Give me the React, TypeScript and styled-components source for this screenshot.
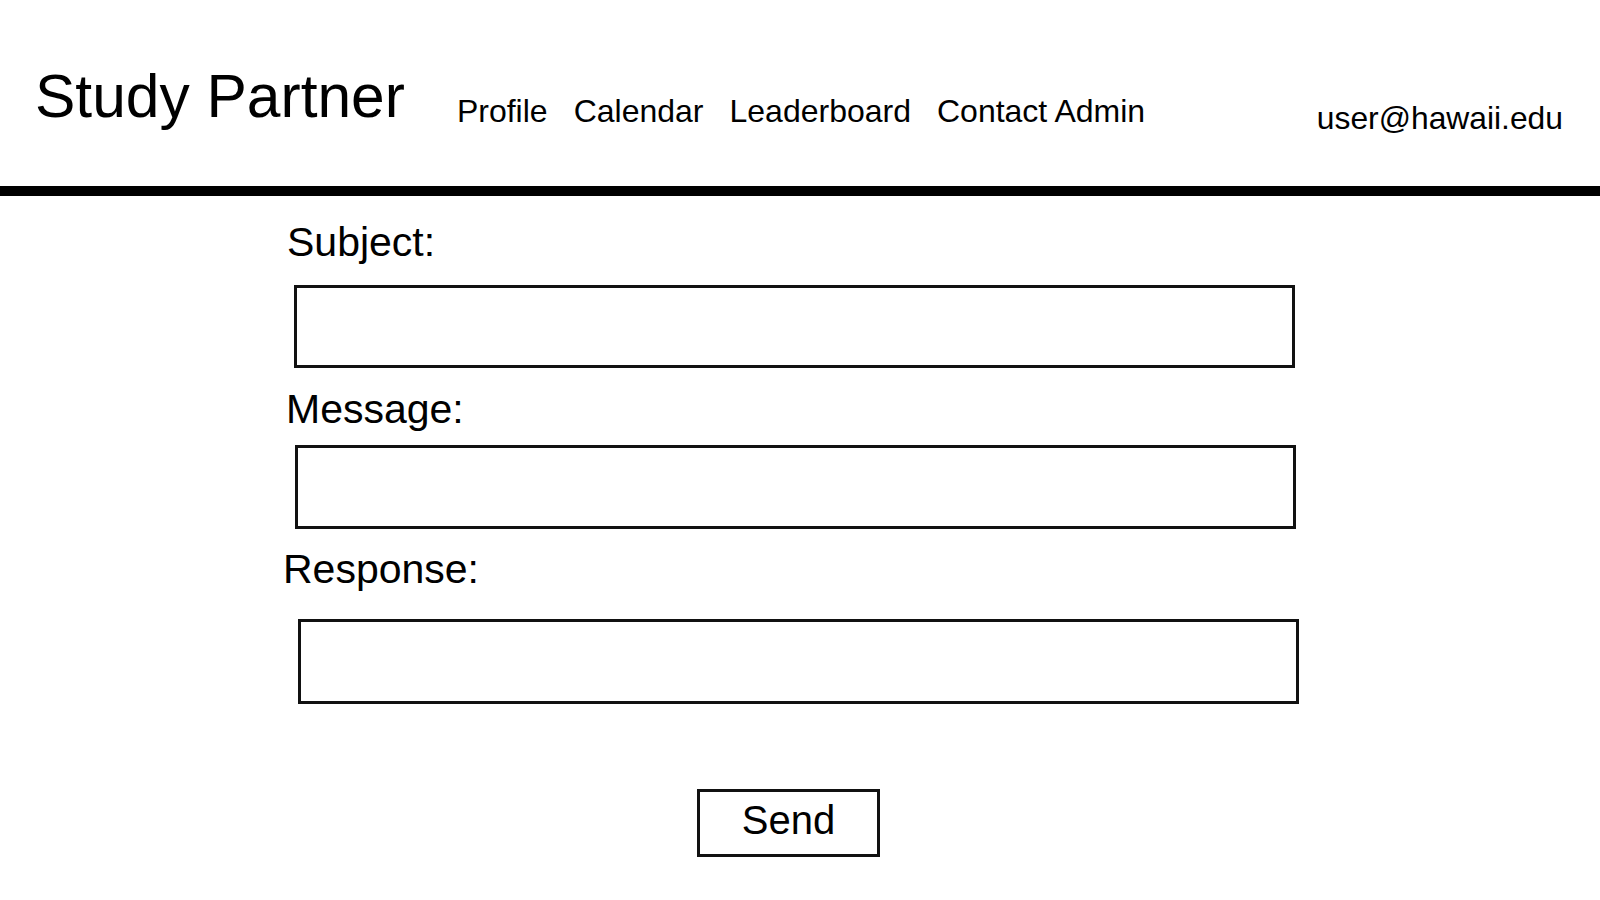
import React from "react";
import styled, { createGlobalStyle } from "styled-components";

const GlobalStyle = createGlobalStyle`
  html, body {
    margin: 0;
    padding: 0;
    background: #ffffff;
  }
  body {
    font-family: "Liberation Sans", Arial, sans-serif;
    color: #000000;
  }
  * { box-sizing: border-box; }
`;

const Page = styled.div`
  width: 1600px;
  min-height: 900px;
  background: #ffffff;
  display: flex;
  flex-direction: column;
`;

const Header = styled.header`
  height: 186px;
  display: flex;
  align-items: flex-start;
  padding: 0 37px 0 35px;
`;

const Brand = styled.h1`
  margin: 66px 0 0 0;
  font-size: 60.5px;
  line-height: 1;
  font-weight: 400;
  white-space: nowrap;
`;

const Nav = styled.nav`
  display: flex;
  gap: 26px;
  margin: 95px 0 0 52px;
`;

const NavLink = styled.a`
  font-size: 32px;
  line-height: 1;
  color: #000000;
  text-decoration: none;
  white-space: nowrap;
  cursor: pointer;
`;

const UserEmail = styled.div`
  margin: 103px 0 0 auto;
  font-size: 31.8px;
  line-height: 1;
  white-space: nowrap;
`;

const Divider = styled.div`
  height: 10px;
  background: #000000;
`;

const Form = styled.form`
  display: flex;
  flex-direction: column;
  padding-left: 283px;
`;

const Label = styled.label<{ $indent: number; $gap: number }>`
  display: block;
  margin: ${(p) => p.$gap}px 0 0 ${(p) => p.$indent}px;
  font-size: 41px;
  line-height: 1;
`;

const Field = styled.input<{ $indent: number; $gap: number; $height: number }>`
  display: block;
  width: 1001px;
  height: ${(p) => p.$height}px;
  margin: ${(p) => p.$gap}px 0 0 ${(p) => p.$indent}px;
  border: 3px solid #111111;
  border-radius: 0;
  background: #ffffff;
  padding: 0 12px;
  font-family: "Liberation Sans", Arial, sans-serif;
  font-size: 28px;
  outline: none;
`;

const SendButton = styled.button`
  align-self: flex-start;
  margin: 85px 0 0 414px;
  width: 183px;
  height: 68px;
  border: 3px solid #111111;
  border-radius: 0;
  background: #ffffff;
  font-family: "Liberation Sans", Arial, sans-serif;
  font-size: 40px;
  line-height: 1;
  color: #000000;
  padding: 0 0 6px 0;
  display: flex;
  align-items: center;
  justify-content: center;
  cursor: pointer;
`;

const fields = [
  { label: "Subject:", labelIndent: 4, labelGap: 26, boxIndent: 11, boxGap: 22, height: 83 },
  { label: "Message:", labelIndent: 3, labelGap: 21, boxIndent: 12, boxGap: 15, height: 84 },
  { label: "Response:", labelIndent: 0, labelGap: 20, boxIndent: 15, boxGap: 29, height: 85 },
];

export default function App() {
  return (
    <>
      <GlobalStyle />
      <Page>
        <Header>
          <Brand>Study Partner</Brand>
          <Nav>
            <NavLink>Profile</NavLink>
            <NavLink>Calendar</NavLink>
            <NavLink>Leaderboard</NavLink>
            <NavLink>Contact Admin</NavLink>
          </Nav>
          <UserEmail>user@hawaii.edu</UserEmail>
        </Header>
        <Divider />
        <Form onSubmit={(e) => e.preventDefault()}>
          {fields.map((f) => (
            <React.Fragment key={f.label}>
              <Label $indent={f.labelIndent} $gap={f.labelGap}>
                {f.label}
              </Label>
              <Field
                type="text"
                aria-label={f.label}
                $indent={f.boxIndent}
                $gap={f.boxGap}
                $height={f.height}
              />
            </React.Fragment>
          ))}
          <SendButton type="submit">Send</SendButton>
        </Form>
      </Page>
    </>
  );
}
